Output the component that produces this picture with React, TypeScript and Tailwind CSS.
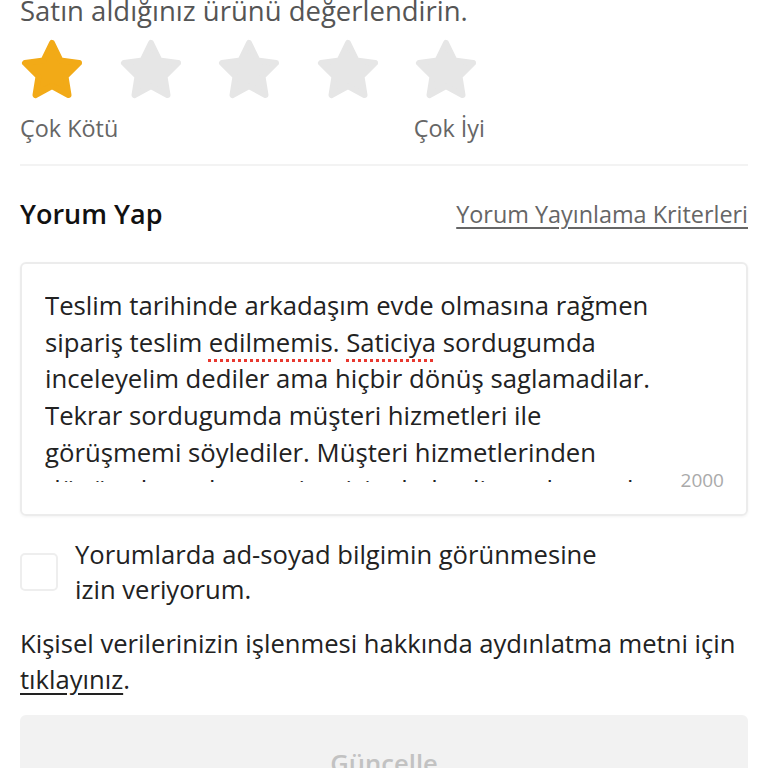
import React from "react";

const Star = ({ filled }: { filled: boolean }) => (
  <svg viewBox="0 0 64 62" className="w-[64px] h-[62px]">
    <polygon
      points="32,5 40.5,22.5 59,25 45.5,38.5 48.5,57 32,48 15.5,57 18.5,38.5 5,25 23.5,22.5"
      fill={filled ? "#f2aa17" : "#e6e6e6"}
      stroke={filled ? "#f2aa17" : "#e6e6e6"}
      strokeWidth="6"
      strokeLinejoin="round"
    />
  </svg>
);

const typo =
  "underline decoration-dotted decoration-[#e8382f] decoration-[3px] underline-offset-[7px]";

const App = () => {
  return (
    <div
      className="w-[768px] h-[768px] overflow-hidden bg-white px-5"
      style={{ fontFamily: '"Open Sans", "Noto Sans", sans-serif' }}
    >
      <p className="-mt-[6px] text-[27.5px] leading-[34px] text-[#555]">
        Satın aldığınız ürünü değerlendirin.
      </p>

      <div className="w-[458px] mt-[10px] flex justify-between">
        {[0, 1, 2, 3, 4].map((i) => (
          <Star key={i} filled={i === 0} />
        ))}
      </div>
      <div className="w-[465px] flex justify-between mt-[13px] text-[23.4px] leading-[30px] text-[#666]">
        <span>Çok Kötü</span>
        <span>Çok İyi</span>
      </div>

      <div className="h-[2px] bg-[#f3f3f3] mt-[21px]" />

      <div className="flex items-center justify-between mt-[31px]">
        <h2 className="text-[27px] leading-[34px] font-semibold text-[#111]">
          Yorum Yap
        </h2>
        <a className="text-[23.4px] leading-[30px] text-[#666] underline underline-offset-4">
          Yorum Yayınlama Kriterleri
        </a>
      </div>

      <div className="relative mt-[31px] h-[254px] rounded-md border-2 border-[#ececec] shadow-[0_1px_3px_rgba(0,0,0,0.05)] px-[23px] pt-[24px]">
        <div className="h-[194px] overflow-hidden whitespace-nowrap text-[25.7px] leading-[36.7px] text-[#222]">
          Teslim tarihinde arkadaşım evde olmasına rağmen
          <br />
          sipariş teslim <span className={typo}>edilmemis</span>.{" "}
          <span className={typo}>Saticiya</span> sordugumda
          <br />
          inceleyelim dediler ama hiçbir dönüş saglamadilar.
          <br />
          Tekrar sordugumda müşteri hizmetleri ile
          <br />
          görüşmemi söylediler. Müşteri hizmetlerinden
          <br />
          dönüş alamadım ve siparişim hala elime ulaşmadı.
        </div>
        <span className="absolute right-[22px] bottom-[22px] text-[19px] leading-[24px] text-[#aaa]">
          2000
        </span>
      </div>

      <label className="flex items-start gap-[17px] mt-[21px]">
        <span className="mt-[16px] w-[38px] h-[38px] shrink-0 rounded-[5px] border-2 border-[#eeeeee]" />
        <span className="text-[25.6px] leading-[35px] text-[#222]">
          Yorumlarda ad-soyad bilgimin görünmesine
          <br />
          izin veriyorum.
        </span>
      </label>

      <p className="mt-[19px] text-[25.6px] leading-[36px] text-[#222]">
        Kişisel verilerinizin işlenmesi hakkında aydınlatma metni için{" "}
        <a className="underline underline-offset-4">tıklayınız</a>.
      </p>

      <button className="mt-[17px] w-full h-[98px] rounded-md bg-[#f2f2f2] text-[25.6px] font-semibold text-[#c2c2c2]">
        Güncelle
      </button>
    </div>
  );
};

export default App;
